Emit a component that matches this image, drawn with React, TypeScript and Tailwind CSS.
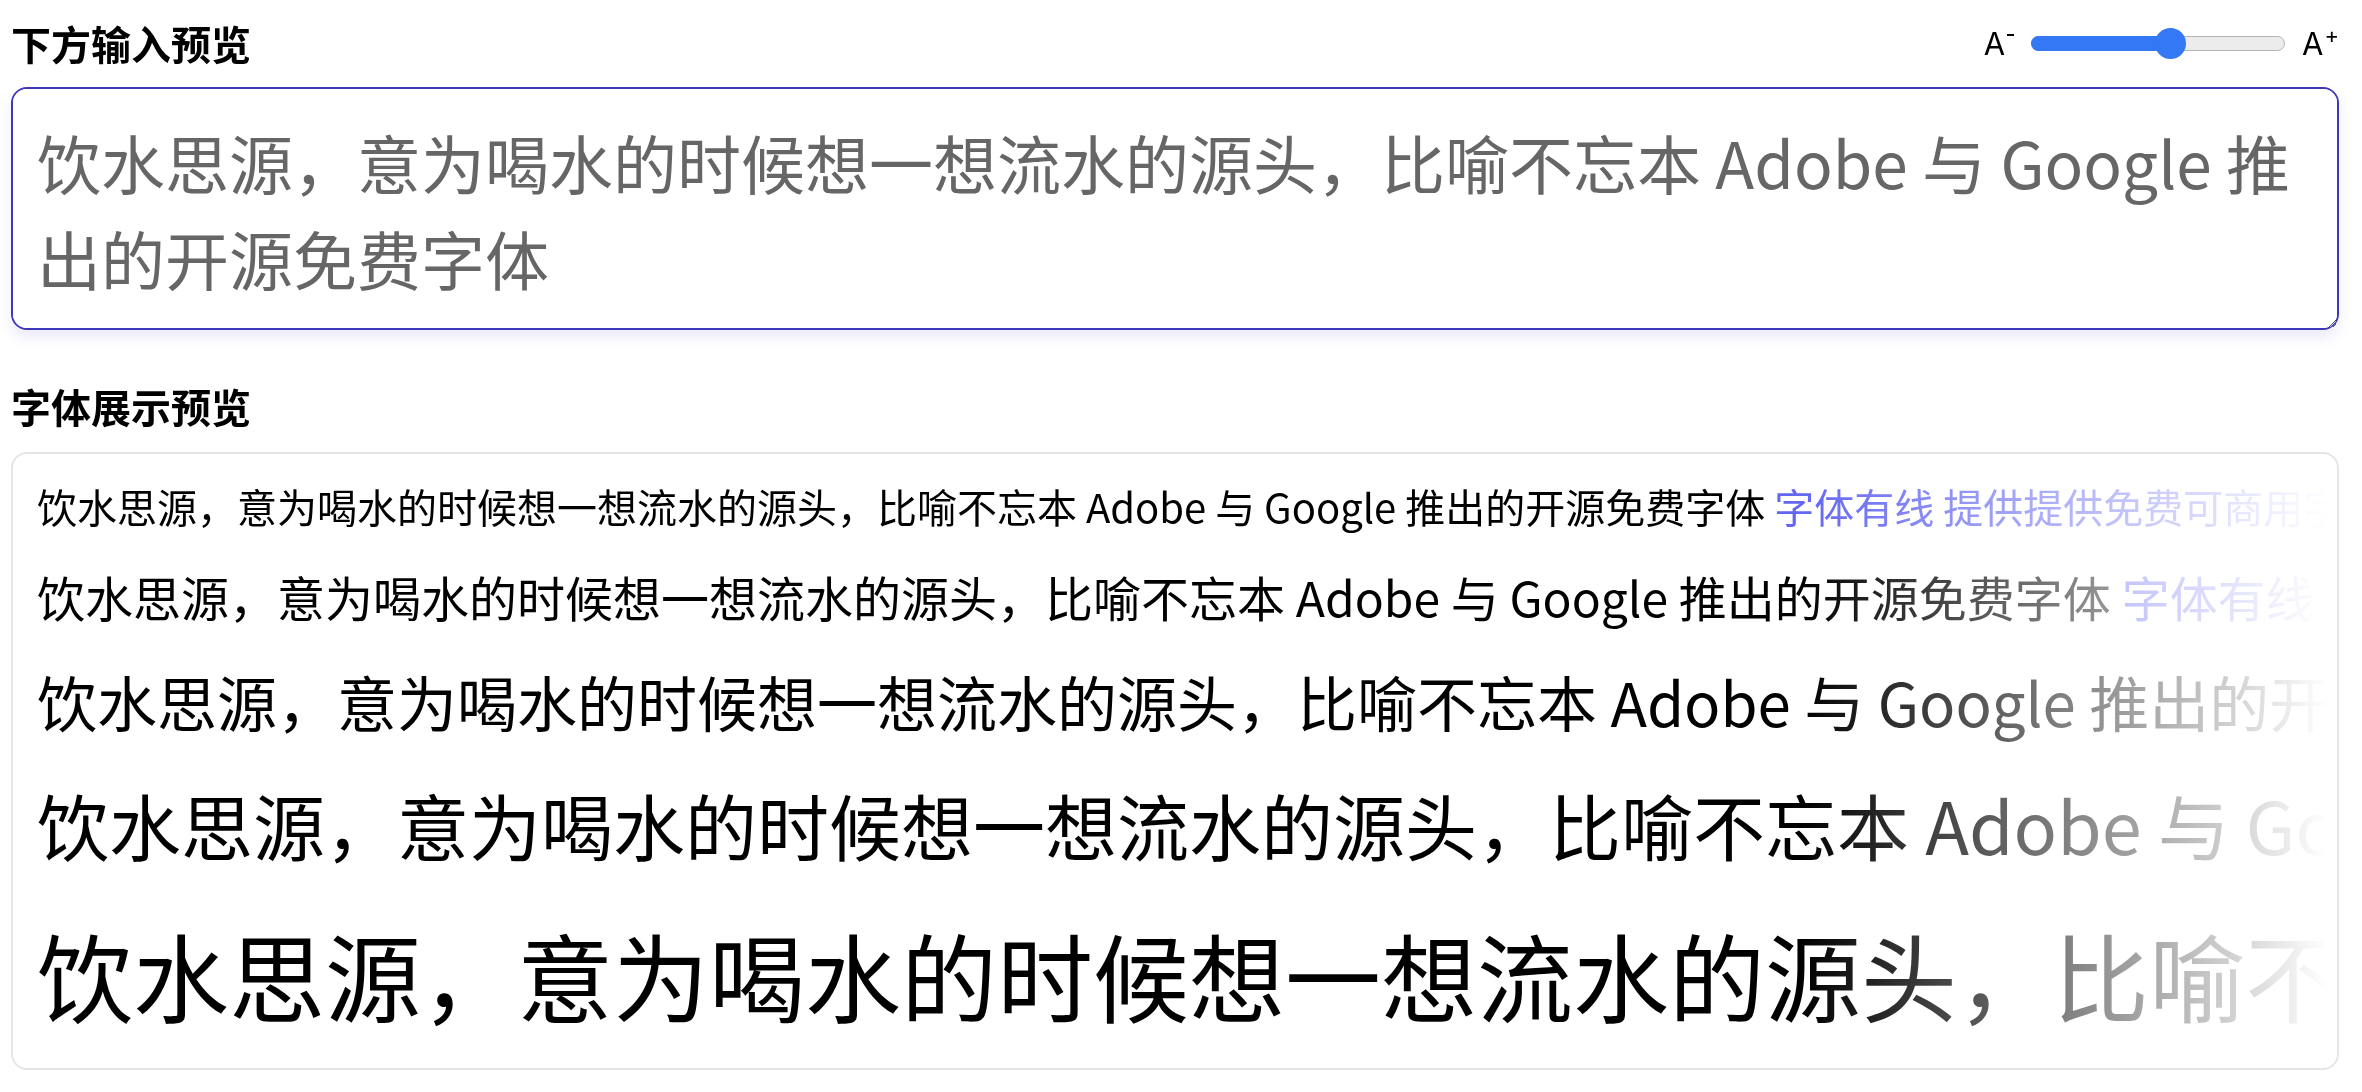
import React from "react";

const SENTENCE =
  "饮水思源，意为喝水的时候想一想流水的源头，比喻不忘本 Adobe 与 Google 推出的开源免费字体";

const lines = [
  "text-[40px] leading-[60px]",
  "text-[48px] leading-[72px]",
  "text-[60px] leading-[90px]",
  "text-[72px] leading-[108px]",
  "text-[96px] leading-[144px]",
];

function Slider() {
  return (
    <div className="flex items-center gap-[17px] text-black font-['Inter','Noto_Sans_CJK_SC',sans-serif]">
      <div className="flex items-start">
        <span className="text-[31px] leading-[31px]">A</span>
        <span className="mt-[6px] ml-[2px] block h-[2.5px] w-[7px] bg-black" />
      </div>
      <div className="relative w-[254px] h-[15px]">
        <div className="h-full w-full rounded-full border-[1.5px] border-[#b3b3b3] bg-[#ececec]" />
        <div className="absolute left-0 top-0 h-[15px] w-[145px] rounded-full bg-[#3478f6]" />
        <div className="absolute left-[124px] top-[-8px] h-[31px] w-[31px] rounded-full bg-[#3478f6]" />
      </div>
      <div className="flex items-start">
        <span className="text-[31px] leading-[31px]">A</span>
        <span className="ml-[1px] mt-[-4px] text-[22px] leading-[22px]">+</span>
      </div>
    </div>
  );
}

export default function App() {
  return (
    <div className="min-h-screen bg-white pt-[13px] pl-[11px] pr-[23px] font-['Noto_Sans_CJK_SC',sans-serif]">
      <div className="flex h-[60px] items-center justify-between mb-[14px]">
        <h2 className="text-[40px] leading-[60px] font-bold text-black">下方输入预览</h2>
        <Slider />
      </div>
      <textarea
        className="block w-full h-[243px] rounded-[16px] border-2 border-[#3f37b8] pl-[24px] pr-[14px] py-[24px] text-[64px] leading-[96px] text-[#666666] font-['Noto_Sans_CJK_SC',sans-serif] shadow-[0_8px_14px_rgba(67,56,202,0.10)] outline-none resize-y bg-white"
        defaultValue={SENTENCE}
      />
      <h2 className="mt-[46px] mb-[16px] text-[40px] leading-[60px] font-bold text-black">字体展示预览</h2>
      <div className="flex flex-col gap-[24px] rounded-[16px] border-2 border-[#e6e6e6] pl-[24px] pr-[10px] py-[22px]">
        {lines.map((cls, i) => (
          <div
            key={i}
            className={`${cls} overflow-hidden whitespace-nowrap text-black [mask-image:linear-gradient(to_right,#000_77%,transparent)] [-webkit-mask-image:linear-gradient(to_right,#000_77%,transparent)]`}
          >
            {SENTENCE} <span className="text-[#6366f1]">字体有线 提供提供免费可商用字体</span>
          </div>
        ))}
      </div>
    </div>
  );
}
